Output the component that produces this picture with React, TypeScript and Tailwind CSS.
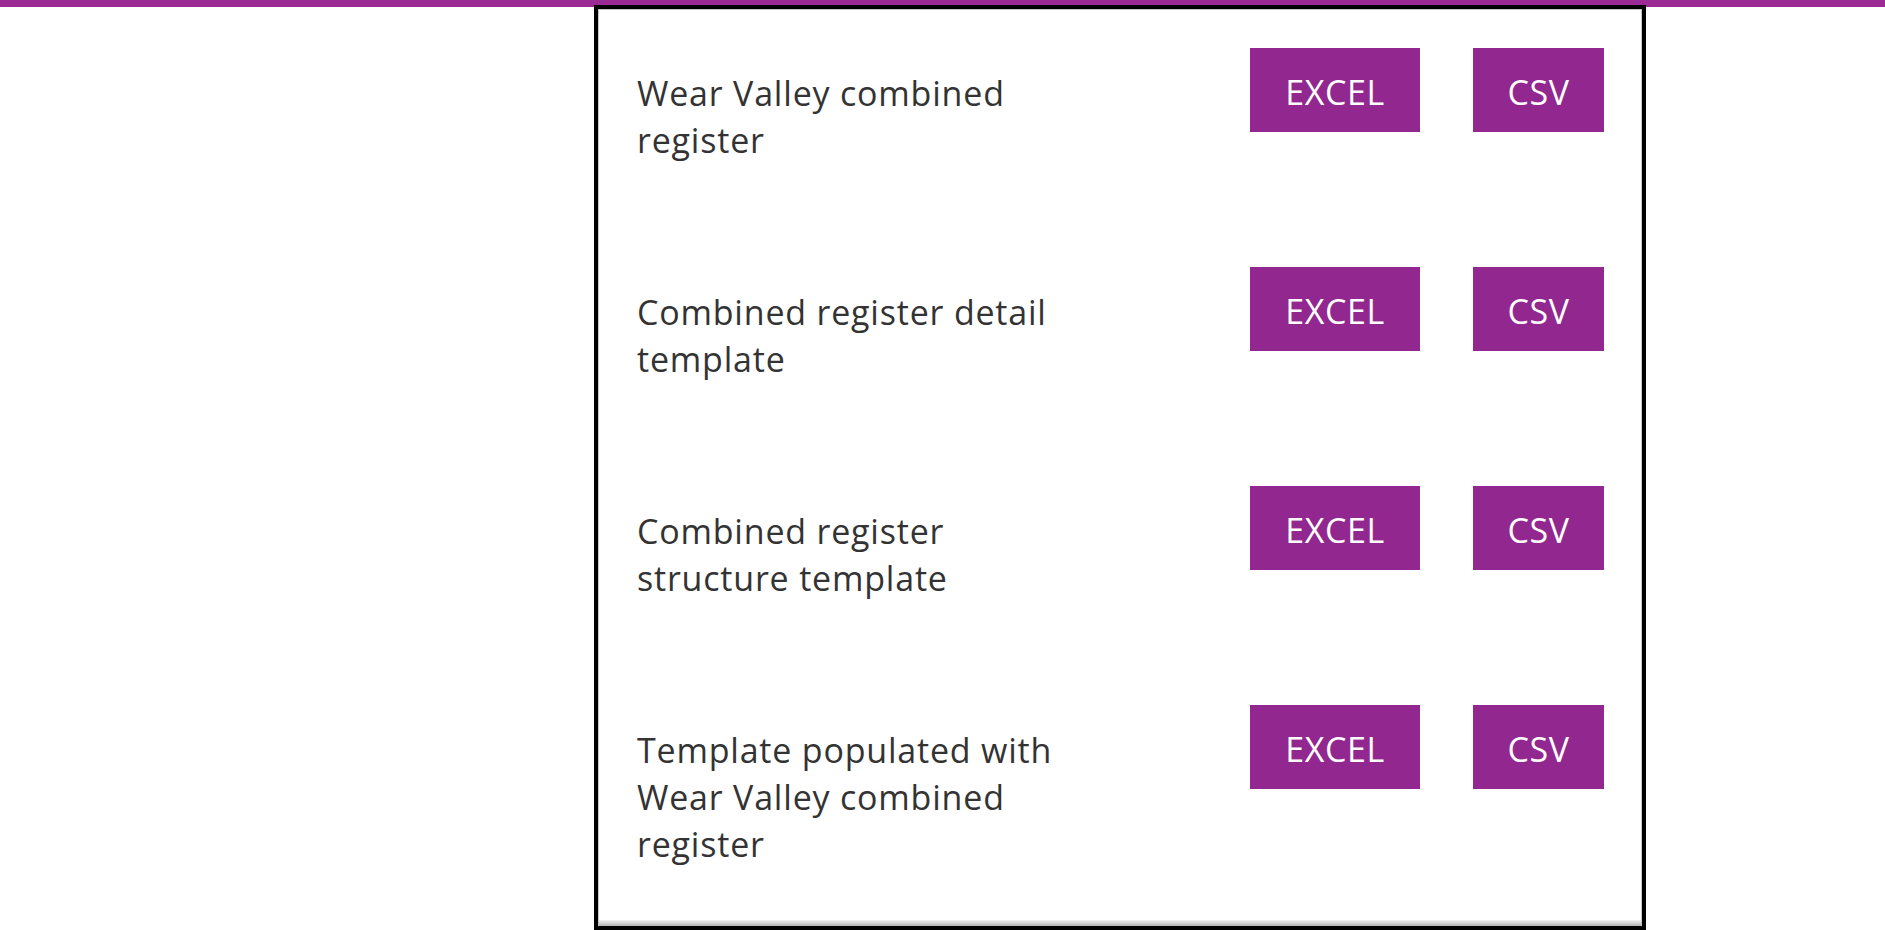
import React from 'react';

type Download = {
  id: string;
  lines: string[];
};

const downloads: Download[] = [
  { id: 'combined', lines: ['Wear Valley combined', 'register'] },
  { id: 'detail', lines: ['Combined register detail', 'template'] },
  { id: 'structure', lines: ['Combined register', 'structure template'] },
  { id: 'populated', lines: ['Template populated with', 'Wear Valley combined', 'register'] },
];

const DownloadButton: React.FC<{ label: string; wide?: boolean }> = ({ label, wide }) => (
  <button
    type="button"
    className={`${wide ? 'w-[170px]' : 'w-[131px]'} h-[84px] pt-[3px] bg-[#92278f] text-white text-[34px] tracking-[0.6px] leading-none flex items-center justify-center`}
  >
    {label}
  </button>
);

export default function App() {
  return (
    <div className="w-[1885px] h-[930px] overflow-hidden bg-white" style={{ fontFamily: '"Open Sans", "Noto Sans", sans-serif' }}>
      {/* top accent strip */}
      <div className="h-[7px] bg-[#9b2a94]" />

      <div className="relative -mt-[2px] ml-[594px] w-[1052px] border-4 border-black bg-white">
        <div className="border-x border-t border-[#c4c4c4]">
          <div className="flex flex-col gap-[103px] pt-[38px] pb-[52px] pl-[38px] pr-[37px]">
            {downloads.map((d) => (
              <div key={d.id} className="flex items-start">
                <div className="mt-[22px] flex-1 text-[34px] tracking-[0.8px] leading-[47px] text-[#333333]">
                  {d.lines.map((line) => (
                    <div key={line}>{line}</div>
                  ))}
                </div>
                <div className="flex gap-[53px]">
                  <DownloadButton label="EXCEL" wide />
                  <DownloadButton label="CSV" />
                </div>
              </div>
            ))}
          </div>
          <div className="h-[6px] bg-linear-to-b from-[#f2f2f2] to-[#b4b4b4]" />
        </div>
      </div>
    </div>
  );
}
